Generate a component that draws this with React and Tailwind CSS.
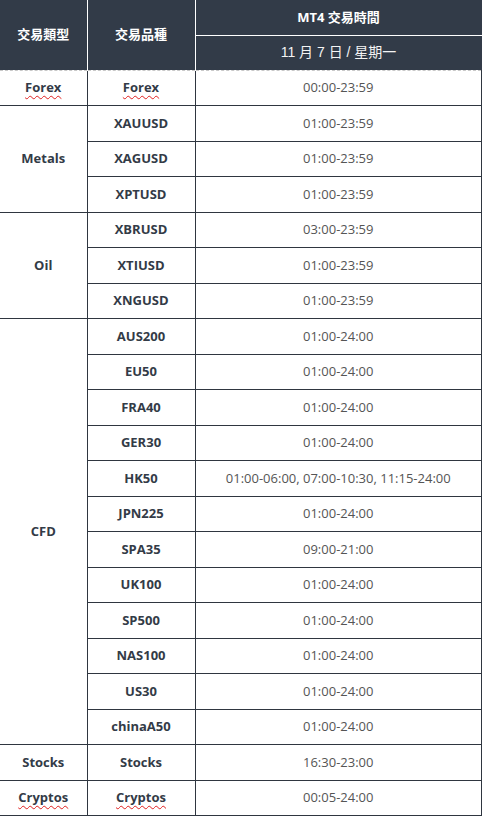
import React from "react";

const rows = [
  { cat: "Forex", sym: "Forex", time: "00:00-23:59", wavy: true, span: 1 },
  { cat: "Metals", sym: "XAUUSD", time: "01:00-23:59", span: 3 },
  { sym: "XAGUSD", time: "01:00-23:59" },
  { sym: "XPTUSD", time: "01:00-23:59" },
  { cat: "Oil", sym: "XBRUSD", time: "03:00-23:59", span: 3 },
  { sym: "XTIUSD", time: "01:00-23:59" },
  { sym: "XNGUSD", time: "01:00-23:59" },
  { cat: "CFD", sym: "AUS200", time: "01:00-24:00", span: 12 },
  { sym: "EU50", time: "01:00-24:00" },
  { sym: "FRA40", time: "01:00-24:00" },
  { sym: "GER30", time: "01:00-24:00" },
  { sym: "HK50", time: "01:00-06:00, 07:00-10:30, 11:15-24:00" },
  { sym: "JPN225", time: "01:00-24:00" },
  { sym: "SPA35", time: "09:00-21:00" },
  { sym: "UK100", time: "01:00-24:00" },
  { sym: "SP500", time: "01:00-24:00" },
  { sym: "NAS100", time: "01:00-24:00" },
  { sym: "US30", time: "01:00-24:00" },
  { sym: "chinaA50", time: "01:00-24:00" },
  { cat: "Stocks", sym: "Stocks", time: "16:30-23:00", span: 1 },
  { cat: "Cryptos", sym: "Cryptos", time: "00:05-24:00", wavy: true, span: 1 },
];

const font = { fontFamily: '"Open Sans", "Noto Sans CJK TC", sans-serif' };

function Wavy({ on, children }) {
  return on ? (
    <span className="underline decoration-wavy decoration-[#e02020] decoration-1 underline-offset-[3px]">
      {children}
    </span>
  ) : (
    children
  );
}

export default function App() {
  return (
    <div className="w-[483px] bg-white" style={font}>
      <table className="w-[482px] border-collapse table-fixed">
        <colgroup>
          <col className="w-[87px]" />
          <col className="w-[108px]" />
          <col />
        </colgroup>
        <thead>
          <tr className="h-[35px] bg-[#323b48] text-white">
            <th
              rowSpan={2}
              className="border-r border-white border-b border-b-[#c8c8c8] border-dashed text-[13px] font-bold p-0"
              style={{ borderRightStyle: "solid" }}
            >
              交易類型
            </th>
            <th
              rowSpan={2}
              className="border-r border-white border-b border-b-[#c8c8c8] border-dashed text-[13px] font-bold p-0"
              style={{ borderRightStyle: "solid" }}
            >
              交易品種
            </th>
            <th className="border-b border-white text-[13px] font-bold p-0">MT4 交易時間</th>
          </tr>
          <tr className="h-[35px] bg-[#323b48] text-[#f4f4f4]">
            <th
              className="border-b border-dashed border-[#c8c8c8] text-[14px] font-normal p-0"
              style={{ fontFamily: '"Liberation Sans", "Noto Sans CJK TC", sans-serif' }}
            >
              11 月 7 日 / 星期一
            </th>
          </tr>
        </thead>
        <tbody>
          {rows.map((r, i) => (
            <tr key={i} className="h-[35.5px]">
              {r.cat && (
                <td
                  rowSpan={r.span}
                  className="border-b border-r border-[#2f3640] text-center text-[13px] font-bold text-[#333b47] p-0"
                >
                  <Wavy on={r.wavy}>{r.cat}</Wavy>
                </td>
              )}
              <td className="border-b border-r border-[#2f3640] text-center text-[13px] font-bold text-[#333b47] p-0">
                <Wavy on={r.wavy}>{r.sym}</Wavy>
              </td>
              <td className="border-b border-r border-[#2f3640] text-center text-[13px] text-[#555555] p-0">
                {r.time}
              </td>
            </tr>
          ))}
        </tbody>
      </table>
    </div>
  );
}
